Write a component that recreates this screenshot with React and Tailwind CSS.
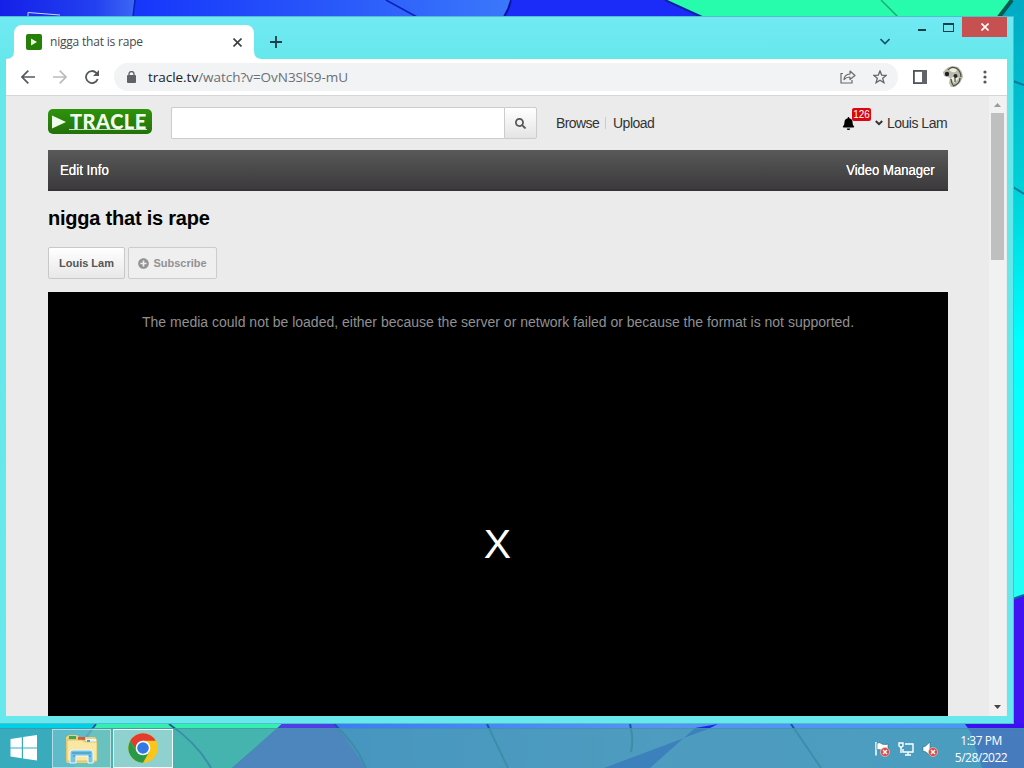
import { FaBell, FaPlusCircle, FaSearch } from "react-icons/fa";

const Wallpaper = () => (
  <svg className="absolute inset-0" width="1024" height="768" viewBox="0 0 1024 768">
    <defs>
      <linearGradient id="topBlue" x1="0" x2="1" y1="0" y2="0">
        <stop offset="0" stopColor="#1420e8" />
        <stop offset="0.7" stopColor="#2340f0" />
        <stop offset="1" stopColor="#3c68f4" />
      </linearGradient>
      <linearGradient id="topMid" x1="0" x2="1" y1="0" y2="0">
        <stop offset="0" stopColor="#1636fb" />
        <stop offset="0.4" stopColor="#2550fa" />
        <stop offset="1" stopColor="#3a78fb" />
      </linearGradient>
      <linearGradient id="side" x1="0" x2="0" y1="0" y2="1">
        <stop offset="0" stopColor="#00aac4" />
        <stop offset="0.3" stopColor="#00d0d8" />
        <stop offset="0.55" stopColor="#00ffff" />
        <stop offset="1" stopColor="#28fff4" />
      </linearGradient>
      <linearGradient id="floor" x1="0" x2="1" y1="0" y2="0">
        <stop offset="0" stopColor="#3d7cf5" />
        <stop offset="0.5" stopColor="#5793f3" />
        <stop offset="1" stopColor="#4a98f5" />
      </linearGradient>
    </defs>
    <rect width="1024" height="768" fill="#1c2cf8" />
    <path d="M0 0H135L133 17H0Z" fill="url(#topBlue)" />
    <path d="M135 0H512L505 17H133Z" fill="url(#topMid)" />
    <path d="M135 0L133 17M386 0L417 17" stroke="#0c20b8" strokeWidth="1.5" />
    <path d="M511 0Q509 9 504 17" stroke="#0a14a0" strokeWidth="2" fill="none" />
    <path d="M28 17V12.500L60 15" stroke="#c6d8ff" strokeWidth="1" fill="none" />
    <path d="M665 0H1012L1000 17H702Z" fill="#26fcab" />
    <path d="M665 0L702 17" stroke="#1220a8" strokeWidth="2" />
    <path d="M881 0L898 17" stroke="#22a877" strokeWidth="1.500" />
    <path d="M1011 0H1024V620H1000V17Z" fill="url(#side)" />
    <path d="M1012 0L999 17" stroke="#075a50" strokeWidth="4" />
    <path d="M1013 81L1024 85M1013 187L1024 194" stroke="#067b98" strokeWidth="2" />
    <path d="M1013 599L1024 595V768H1013Z" fill="#4213f2" />
    <path d="M1013 599L1024 595" stroke="#0b679c" strokeWidth="2" />
    <path d="M0 724H96L83 768H0Z" fill="#00d0e6" />
    <path d="M96 724H282L232 768H74Z" fill="#35efb1" />
    <path d="M282 724H338L368 768H232Z" fill="#513de8" />
    <path d="M336 724H968L982 768H366Z" fill="url(#floor)" />
    <path d="M695 728L718 724L708 729L604 768H650Z" fill="#1428e8" />
    <path d="M965 724H1024V768H986Q979 742 965 724Z" fill="#3a10f0" />
    <path d="M96 724L83 741M169 724Q197 743 211 768M334 724Q355 742 366 768M487 724L508 768M630 724Q634 740 631 752M791 724L821 768" stroke="#125a98" strokeWidth="2" fill="none" />
  </svg>
);

const WindowButtons = () => (
  <div className="flex h-[20px] items-stretch">
    <div className="flex w-[27px] items-center justify-center">
      <span className="mt-[6px] h-[2px] w-2 bg-[#173d47]" />
    </div>
    <div className="flex w-[27px] items-center justify-center">
      <span className="h-[9px] w-[11px] border border-t-2 border-[#173d47]" />
    </div>
    <div className="flex w-[45px] items-center justify-center bg-[#c75050]">
      <svg width="8" height="8" viewBox="0 0 8 8" stroke="#fff" strokeWidth="1.600">
        <path d="M0.500 0.500L7.500 7.500M7.500 0.500L0.500 7.500" />
      </svg>
    </div>
  </div>
);

const TabStrip = () => (
  <div className="flex h-[42px] items-start">
    <div className="relative ml-[8px] mt-[8px] flex h-[34px] w-[240px] items-center rounded-t-lg bg-white pl-[12px]">
      <svg className="absolute -left-2 bottom-0" width="8" height="8" viewBox="0 0 8 8">
        <path d="M8 0V8H0Q8 8 8 0" fill="#fff" />
      </svg>
      <svg className="absolute -right-2 bottom-0" width="8" height="8" viewBox="0 0 8 8">
        <path d="M0 0V8H8Q0 8 0 0" fill="#fff" />
      </svg>
      <svg width="16" height="16" viewBox="0 0 16 16">
        <rect width="16" height="16" rx="2" fill="#268008" />
        <path d="M5 4.500L11 8L5 11.500Z" fill="#e7ffe0" />
      </svg>
      <span className="ml-[8px] w-[183px] whitespace-nowrap text-[12px] tracking-[-0.2px] text-[#45494d]">
        nigga that is rape
      </span>
      <svg width="9" height="9" viewBox="0 0 9 9" stroke="#3c4043" strokeWidth="1.600">
        <path d="M0.500 0.500L8.500 8.500M8.500 0.500L0.500 8.500" />
      </svg>
    </div>
    <svg className="ml-[16px] mt-[19px]" width="12" height="12" viewBox="0 0 12 12" stroke="#1c3d4c" strokeWidth="1.800">
      <path d="M6 0V12M0 6H12" />
    </svg>
    <svg className="ml-auto mr-[18px] mt-[21px]" width="10" height="7" viewBox="0 0 10 7" fill="none" stroke="#17576b" strokeWidth="1.700">
      <path d="M0.500 1L5 5.500L9.500 1" />
    </svg>
    <WindowButtons />
  </div>
);

const Toolbar = () => (
  <div className="flex h-[37px] items-center border-b border-[#d5d6d8] bg-white pl-[15px]">
    <svg width="14" height="14" viewBox="0 0 14 14" fill="none" stroke="#55595d" strokeWidth="1.700">
      <path d="M14 7H1M7.300 0.700L1 7L7.300 13.300" />
    </svg>
    <svg className="ml-[18px]" width="14" height="14" viewBox="0 0 14 14" fill="none" stroke="#babcbe" strokeWidth="1.700">
      <path d="M0 7H13M6.700 0.700L13 7L6.700 13.300" />
    </svg>
    <svg className="ml-[18px]" width="14" height="14" viewBox="0 0 14 14" fill="none" stroke="#55595d" strokeWidth="1.800">
      <path d="M12.700 9A6 6 0 1 1 11.300 2.800L13 4.500" />
      <path d="M14 0V6H8Z" fill="#55595d" stroke="none" />
    </svg>
    <div className="ml-[15px] flex h-[28px] w-[784px] items-center rounded-full bg-[#f1f3f4] pl-[13px] pr-[11px]">
      <svg width="9" height="12" viewBox="0 0 9 12">
        <rect y="4" width="9" height="8" rx="1" fill="#5f6368" />
        <path d="M2 4V2.800A2.500 2.300 0 0 1 7 2.800V4" fill="none" stroke="#5f6368" strokeWidth="1.300" />
      </svg>
      <span className="ml-[12px] whitespace-nowrap text-[13.5px] tracking-[-0.03px] text-[#6b6f73]">
        <span className="text-[#202124]">tracle.tv</span>/watch?v=OvN3SlS9-mU
      </span>
      <svg className="ml-auto" width="16" height="14" viewBox="0 0 16 14" fill="none" stroke="#696d71" strokeWidth="1.200">
        <path d="M3 3.500H1V13H12V10" />
        <path d="M4 9.500Q4.500 4.500 10 4V1L15 5.500L10 9.500V7Q6.500 7 4 9.500Z" strokeLinejoin="round" />
      </svg>
      <svg className="ml-[17px]" width="14" height="14" viewBox="0 0 14 14" fill="none" stroke="#5f6368" strokeWidth="1.300">
        <path d="M7 1L8.700 5.100L13.200 5.400L9.700 8.300L10.900 12.700L7 10.300L3.100 12.700L4.300 8.300L0.800 5.400L5.300 5.100Z" />
      </svg>
    </div>
    <svg className="ml-[15px]" width="14" height="14" viewBox="0 0 14 14">
      <rect x="0.900" y="0.900" width="12.200" height="12.200" fill="none" stroke="#505458" strokeWidth="1.800" />
      <rect x="9" y="0" width="5" height="14" fill="#606468" />
    </svg>
    <svg className="ml-[16px]" width="20" height="22" viewBox="0 0 20 22">
      <path d="M0 6L4 2L9 0L15 1L19 6L20 11L17 17L12 21L8 21L6 17L7 12L1 10Z" fill="#b9baa9" />
      <path d="M6 4Q10 0 14 4Q13 7 9 6ZM8 12Q11 9 16 12L11 17Z" fill="#efeee2" />
      <path d="M5 4Q8 0 13 2Q18 5 18 11M17 12Q17 18 10 20M8 13Q9 19 11 20M12 12V16" fill="none" stroke="#4a4e44" strokeWidth="1.200" />
      <circle cx="4" cy="8" r="2.200" fill="#1b2025" />
      <circle cx="12.500" cy="10" r="2" fill="#25272a" />
    </svg>
    <svg className="ml-[20px]" width="4" height="14" viewBox="0 0 4 14" fill="#55595d">
      <circle cx="2" cy="2" r="1.600" />
      <circle cx="2" cy="7" r="1.600" />
      <circle cx="2" cy="12" r="1.600" />
    </svg>
  </div>
);

const SiteHeader = () => (
  <header className="flex h-[54px] items-start text-[14px] text-[#333]">
    <div className="mt-[13px] flex h-[25px] w-[104px] items-center rounded-[5px] bg-gradient-to-b from-[#2f930b] to-[#24700b] pl-1">
      <svg width="14" height="14" viewBox="0 0 14 14" fill="#efffe9">
        <path d="M0 0.500L14 7L0 13.500Z" />
      </svg>
      <span className="ml-[3px] w-[78px] whitespace-nowrap border-b border-[#c8e4bf] pl-px font-[Lato,sans-serif] text-[20px] font-black leading-[15px] tracking-[0.5px] text-[#f0ffeb]">
        TRACLE
      </span>
    </div>
    <div className="ml-[19px] mt-[11px] flex h-[32px] w-[366px]">
      <input type="text" className="w-[333px] rounded-l-[2px] border border-r-0 border-[#ccc] bg-white outline-none" />
      <button className="flex w-[33px] items-center justify-center rounded-r-[2px] border border-[#ccc] bg-gradient-to-b from-white to-[#e4e4e4]">
        <FaSearch size={11} color="#555" />
      </button>
    </div>
    <nav className="ml-[19px] mt-[17px] flex h-5 items-center leading-5">
      <a className="w-[44px] tracking-[-0.6px]">Browse</a>
      <span className="ml-[5px] mr-[7px] h-[12px] w-px bg-[#ccc]" />
      <a className="tracking-[-0.5px]">Upload</a>
    </nav>
    <div className="relative ml-auto mt-[17px] flex h-5 items-center leading-5">
      <FaBell size={13} color="#000" className="mr-[20px]" />
      <span className="absolute -top-[5px] left-[10px] flex h-[13px] w-[19px] items-center justify-center rounded-[2px] bg-[#dc0610] text-[10px] leading-none text-white">
        126
      </span>
      <svg className="mr-1" width="8" height="6" viewBox="0 0 8 6" fill="none" stroke="#333" strokeWidth="2">
        <path d="M0.800 1L4 4.200L7.200 1" />
      </svg>
      <span className="w-[61px] whitespace-nowrap tracking-[-0.5px]">Louis Lam</span>
    </div>
  </header>
);

const Player = () => (
  <div className="mt-[13px] flex h-[424px] flex-col items-center bg-black">
    <p className="mt-[20px] whitespace-nowrap text-[14px] leading-5 text-[#909090]">
      The media could not be loaded, either because the server or network failed or because the format is not supported.
    </p>
    <span className="-ml-px mt-[182px] font-['Liberation_Sans',Arial,sans-serif] text-[41px] leading-[60px] text-white">X</span>
  </div>
);

const WatchPage = () => (
  <main className="w-[900px] font-['Liberation_Sans',Arial,sans-serif]">
    <SiteHeader />
    <div className="flex h-[41px] items-center justify-between border-b-2 border-[#353335] bg-gradient-to-b from-[#595959] to-[#3c3a3c] px-3 pt-[2px] text-[14px] text-white [text-shadow:0_0_0.5px_white]">
      <span className="origin-left scale-x-[0.95]">Edit Info</span>
      <span className="mr-px origin-right scale-x-[0.935]">Video Manager</span>
    </div>
    <h1 className="mt-[14px] text-[20px] font-bold leading-[26px] tracking-[-0.22px] text-black">
      nigga that is rape
    </h1>
    <div className="mt-[16px] flex gap-[3px] text-[11px] font-bold">
      <button className="h-[32px] w-[77px] rounded-[2px] border border-[#c8c8c8] bg-gradient-to-b from-white to-[#e8e8e8] text-[#555]">
        Louis Lam
      </button>
      <button className="flex h-[32px] w-[89px] items-center justify-center gap-1 rounded-[2px] border border-[#ccc] bg-[#efefef] text-[#929292]">
        <FaPlusCircle size={11} />
        Subscribe
      </button>
    </div>
    <Player />
  </main>
);

const Scrollbar = () => (
  <div className="mr-px flex w-[17px] flex-col items-center bg-[#f1f1f1]">
    <svg className="mt-[7px]" width="7" height="4" viewBox="0 0 7 4">
      <path d="M0 4L3.500 0L7 4Z" fill="#9b9b9b" />
    </svg>
    <div className="mt-[6px] h-[147px] w-[13px] bg-[#bfbfbf]" />
    <svg className="mb-[7px] mt-auto" width="7" height="4" viewBox="0 0 7 4">
      <path d="M0 0L3.500 4L7 0Z" fill="#444" />
    </svg>
  </div>
);

const Browser = () => (
  <div className="absolute left-0 top-4 h-[708px] w-[1014px] border border-l-0 border-[#53bdd0] bg-[#6ae8ed] bg-gradient-to-b from-[#70e9f3] via-[#66e8eb] via-[6%] to-[#66e8ec] pl-[6px] pr-[6px]">
    <TabStrip />
    <Toolbar />
    <div className="flex h-[620px] overflow-hidden bg-[#ebebeb] pl-[42px]">
      <WatchPage />
      <div className="ml-auto flex">
        <Scrollbar />
      </div>
    </div>
  </div>
);

const ErrorBadge = () => (
  <g>
    <circle cx="11" cy="11" r="4.500" fill="#d84b44" stroke="#f2c6c3" strokeWidth="0.700" />
    <path d="M9 9L13 13M13 9L9 13" stroke="#fff" strokeWidth="1.400" />
  </g>
);

const Taskbar = () => (
  <div className="absolute inset-x-0 bottom-0 flex h-10 items-center border-t border-[#3c91a5]/60 bg-[#4b9fae]/75">
    <svg className="ml-[10px] -mt-[2px]" width="28" height="26" viewBox="0 0 28 26" fill="#fff">
      <path d="M0.500 4L11.800 2.300V12.500H0.500ZM13 2L27 0V12.500H13ZM0.500 13.500H11.800V23.300L0.500 21.500ZM13 13.500H27V25.500L13 23.500Z" />
    </svg>
    <div className="ml-[14px] flex h-[39px] w-[59px] items-center justify-center border border-white/50 bg-white/20">
      <svg width="34" height="30" viewBox="0 0 34 30">
        <path d="M1 3L4 1H12L14 3H30L32 6V27L28 29H2L1 27Z" fill="#ead17c" />
        <path d="M4 2H11V5H4Z" fill="#39a857" />
        <path d="M13 3H20V6H13Z" fill="#d45a3b" />
        <path d="M21 5H31V8H21Z" fill="#e5f6ff" />
        <path d="M22 6H25V8H22Z" fill="#3f90d2" />
        <path d="M2 6H17L20 8H32V27H2Z" fill="#fae8a2" stroke="#d2b65e" strokeWidth="0.700" />
        <path d="M5 29V19Q5 16 8 16H25Q28 16 28 19V29H23V22H11V29Z" fill="#78c3e5" stroke="#e8fbff" strokeWidth="1" />
        <path d="M7 19H26M8 22H10M24 22H26" stroke="#388eb8" />
      </svg>
    </div>
    <div className="ml-[2px] flex h-[39px] w-[60px] items-center justify-center border border-white/95 bg-white/40">
      <svg className="-mt-[2px]" width="30" height="30" viewBox="0 0 30 30">
        <circle cx="15" cy="15" r="14.700" fill="#fbc51a" />
        <path d="M2.270 7.650A14.700 14.700 0 0 0 15 29.700L21.400 18.600L15 15L8.600 18.600Z" fill="#299847" />
        <path d="M2.270 7.650L8.600 18.600L15 15V7.650Z" fill="#299847" />
        <path d="M2.270 7.650A14.700 14.700 0 0 1 27.730 7.650H15A7.300 7.300 0 0 0 8 12.500L7.700 15Z" fill="#e33b2e" />
        <circle cx="15" cy="15" r="7.300" fill="#fff" />
        <circle cx="15" cy="15" r="5.800" fill="#3478e5" />
      </svg>
    </div>
    <svg className="ml-auto mt-px" width="16" height="16" viewBox="0 0 16 16">
      <path d="M2 1V14.500" stroke="#fff" strokeWidth="1.500" />
      <path d="M3 2Q6 1 8 3Q11 4 14 3V10Q9 11 7 9Q5 8 3 9Z" fill="#fff" stroke="#286678" strokeWidth="0.600" />
      <ErrorBadge />
    </svg>
    <svg className="ml-2 mt-px" width="16" height="16" viewBox="0 0 16 16" fill="none" stroke="#fff" strokeWidth="1.400">
      <path d="M7 3H15V11H5V8M10 11V14M7 14H13M3 6V12" />
      <path d="M1 2H5V5L3 6.500L1 5Z" />
    </svg>
    <svg className="ml-2 mt-px" width="16" height="16" viewBox="0 0 16 16">
      <path d="M1 5.500H3L8 1V14L3 10.500H1Z" fill="#fff" stroke="#27687d" strokeWidth="0.600" />
      <ErrorBadge />
    </svg>
    <div className="ml-[13px] mr-[13px] flex w-[60px] flex-col items-center whitespace-nowrap text-[12px] leading-[17px] tracking-[-0.5px] text-white">
      <span>1:37 PM</span>
      <span>5/28/2022</span>
    </div>
  </div>
);

const App = () => {
  return (
    <div className="relative h-[768px] w-[1024px] overflow-hidden font-['Open_Sans','Noto_Sans',sans-serif]">
      <Wallpaper />
      <Browser />
      <Taskbar />
    </div>
  );
};

export default App;
